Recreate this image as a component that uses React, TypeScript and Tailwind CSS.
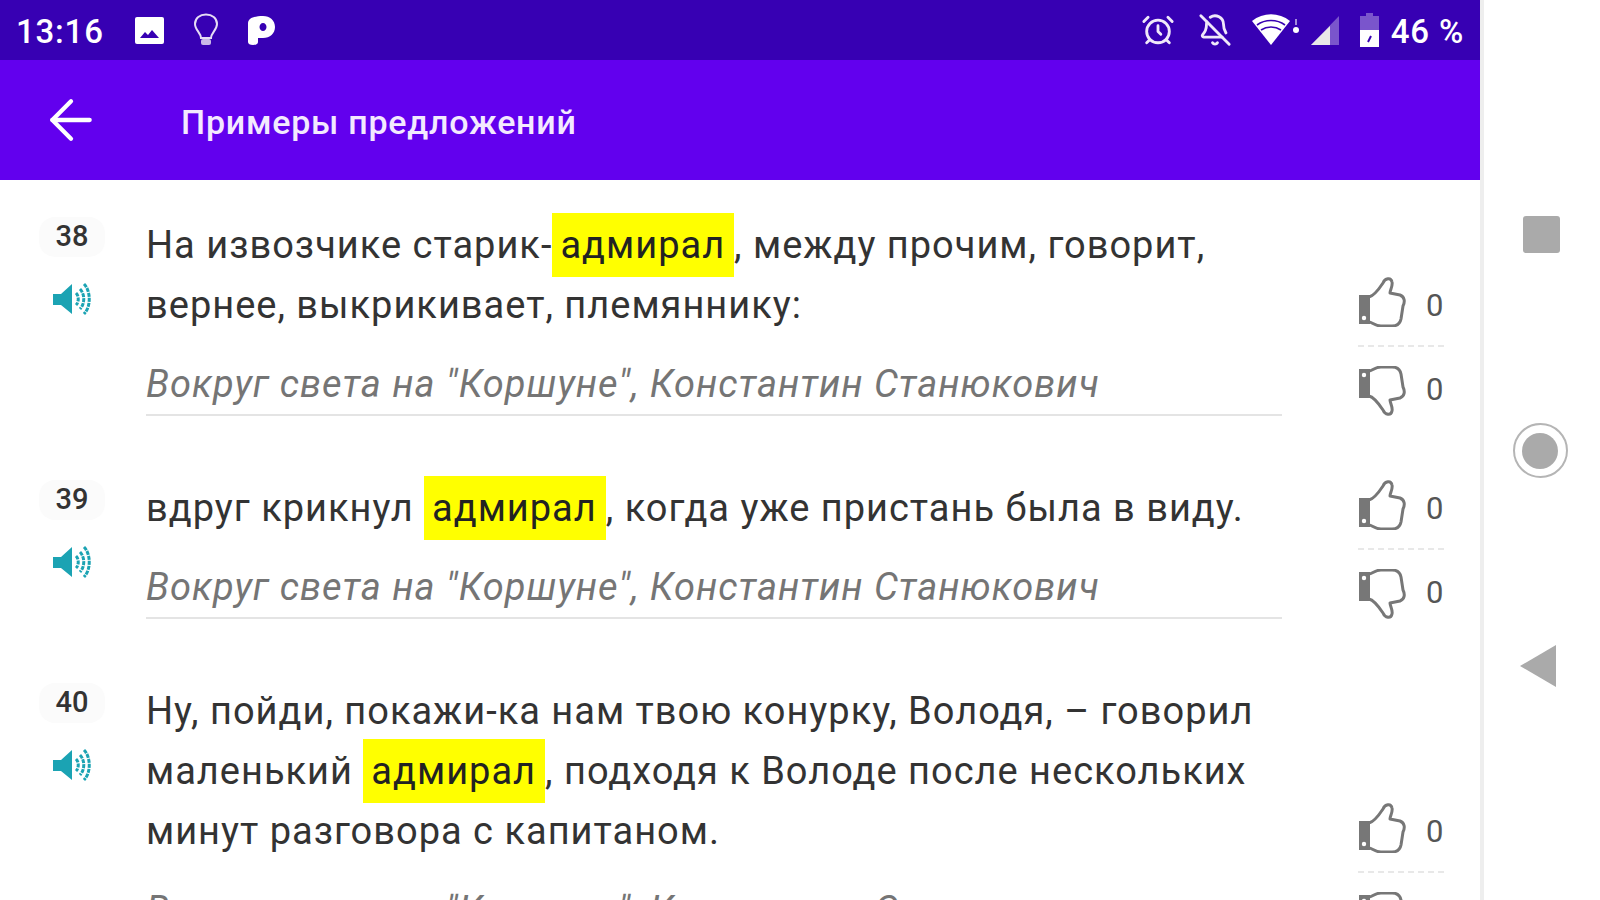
import { AlarmClock, ArrowLeft, BellOff } from "lucide-react";

interface Sentence {
  id: number;
  parts: (string | { hl: string })[];
}

const SOURCE = 'Вокруг света на "Коршуне", Константин Станюкович';

const SENTENCES: Sentence[] = [
  {
    id: 38,
    parts: ["На извозчике старик-", { hl: "адмирал" }, ", между прочим, говорит, вернее, выкрикивает, племяннику:"],
  },
  {
    id: 39,
    parts: ["вдруг крикнул ", { hl: "адмирал" }, ", когда уже пристань была в виду."],
  },
  {
    id: 40,
    parts: [
      "Ну, пойди, покажи-ка нам твою конурку, Володя, – говорил маленький ",
      { hl: "адмирал" },
      ", подходя к Володе после нескольких минут разговора с капитаном.",
    ],
  },
];

function Thumb({ down }: { down?: boolean }) {
  return (
    <svg width="48" height="50" viewBox="0 0 48 50" fill="none" className={down ? "-scale-y-100" : ""}>
      <rect x="1" y="18" width="11" height="29" fill="#777777" />
      <circle cx="6" cy="41" r="2.2" fill="#ffffff" />
      <path
        d="M11 20C16 19 21 12 25 6C27 1 33 0 34 5C35 9 32 13 32 16L42 18C47 20 47 25 45 29L43 42C42 47 38 49 34 49L23 49C17 49 14 45 11 45"
        stroke="#777777"
        strokeWidth="3"
        strokeLinejoin="round"
      />
    </svg>
  );
}

function Speaker() {
  return (
    <svg width="39" height="34" viewBox="0 0 39 34" fill="none">
      <path d="M0 12H8L19 2V32L8 23H0Z" fill="#1ba3b3" />
      <path d="M23 11C26 14 26 20 23 23" stroke="#1ba3b3" strokeWidth="3" strokeDasharray="4 1" />
      <path d="M27 7C32 12 32 22 27 27" stroke="#1ba3b3" strokeWidth="3" strokeDasharray="4 1" />
      <path d="M31 2C38 9 38 25 31 32" stroke="#1ba3b3" strokeWidth="3" strokeDasharray="4 1" />
    </svg>
  );
}

function StatusBar() {
  return (
    <div className="h-[60px] shrink-0 bg-[#3700b3] flex items-center text-white font-medium text-[33px] tracking-[0.8px]">
      <span className="ml-[16px] w-[88px] pt-[4px]">13:16</span>
      <svg width="29" height="27" viewBox="0 0 29 27" className="ml-[31px]">
        <rect width="29" height="27" rx="2" fill="#ffffff" />
        <path d="M5 21L10 15L13 18L17 13L24 21Z" fill="#3700b3" />
      </svg>
      <svg width="26" height="34" viewBox="0 0 26 34" fill="none" className="ml-[29px]">
        <path
          d="M8 25C8 20 2 17 2 11C2 5 7 1.5 13 1.5C19 1.5 24 5 24 11C24 17 18 20 18 25Z"
          stroke="#e6dcf5"
          strokeWidth="2"
        />
        <rect x="8" y="26" width="10" height="6" rx="2" fill="#c9b8e8" />
      </svg>
      <svg width="27" height="29" viewBox="0 0 27 29" className="ml-[29px]">
        <path
          fillRule="evenodd"
          d="M2 3C5 1 9 0 15 0C22 0 27 4.500 27 11C27 17.500 22 22 15 22H10V26C10 28 8 29 5 29C2 29 0 28 0 26V7C0 5 1 4 2 3ZM15 7C13 7 11.500 8.800 11.500 11C11.500 13.200 13 15 15 15C17 15 18.500 13.200 18.500 11C18.500 8.800 17 7 15 7Z"
          fill="#ffffff"
        />
      </svg>
      <div className="ml-auto flex items-center">
        <AlarmClock size={34} strokeWidth={2} className="text-[#f0e8fa]" />
        <BellOff size={34} strokeWidth={2} className="ml-[23px] text-[#f0e8fa]" />
        <svg width="48" height="32" viewBox="0 0 48 32" className="ml-[20px]">
          <path d="M0 7C11 -2 27 -2 38 7L19 31Z" fill="#ffffff" />
          <path d="M5 11C13 5 25 5 33 11M9 16C15 12 23 12 29 16" stroke="#3700b3" strokeWidth="1.6" fill="none" />
          <circle cx="44" cy="16" r="3" fill="#ffffff" />
          <rect x="43" y="5" width="2" height="6" fill="#a58bdc" />
        </svg>
        <svg width="28" height="29" viewBox="0 0 28 29" className="ml-[11px]">
          <path d="M0 29L28 0V29Z" fill="#7a55cc" />
          <path d="M0 29L19 10V29Z" fill="#e8e8e8" />
        </svg>
        <svg width="19" height="34" viewBox="0 0 19 34" className="ml-[21px]">
          <path d="M6 0H13V3H19V34H0V3H6Z" fill="#7a55cc" />
          <path d="M0 17H19V34H0Z" fill="#ffffff" />
          <path d="M8 29L11 23" stroke="#3700b3" strokeWidth="2" />
        </svg>
        <span className="ml-[12px] mr-[16px] pt-[4px]">46 %</span>
      </div>
    </div>
  );
}

function Row({ sentence }: { sentence: Sentence }) {
  return (
    <div className="flex">
      <div className="w-[146px] shrink-0 flex flex-col items-center pr-[2px]">
        <div className="mt-[2px] w-[66px] h-[40px] rounded-[16px] bg-[#fbfbfb] flex items-center justify-center text-[29px] font-medium text-[#333333]">
          {sentence.id}
        </div>
        <div className="mt-[25px]">
          <Speaker />
        </div>
      </div>
      <div className="w-[1136px] shrink-0">
        <p className="text-[38px] leading-[60px] tracking-[1px] text-[#333333]">
          {sentence.parts.map((part, i) =>
            typeof part === "string" ? (
              <span key={i}>{part}</span>
            ) : (
              <span key={i} className="bg-[#ffff00] pl-[8px] pr-[9px] py-[10px] text-[#222222]">
                {part.hl}
              </span>
            )
          )}
        </p>
        <div className="mt-[19px] border-b-2 border-[#e4e4e4] text-[38px] leading-[60px] tracking-[1px] italic text-[#757575]">
          {SOURCE}
        </div>
      </div>
      <div className="ml-[76px] w-[86px] self-end flex flex-col">
        <div className="flex items-center pb-[18px] border-b-2 border-dashed border-[#e8e8e8]">
          <Thumb />
          <span className="ml-[20px] mt-[6px] text-[31px] leading-none text-[#555555]">0</span>
        </div>
        <div className="flex items-center pt-[19px]">
          <Thumb down />
          <span className="ml-[20px] -mt-[3px] text-[31px] leading-none text-[#555555]">0</span>
        </div>
      </div>
    </div>
  );
}

export default function App() {
  return (
    <div className="w-[1600px] h-[900px] overflow-hidden flex bg-white font-['Roboto',sans-serif]">
      <div className="w-[1480px] shrink-0 flex flex-col">
        <StatusBar />
        <div className="h-[120px] shrink-0 bg-[#6200ee] flex items-center text-white">
          <ArrowLeft size={64} strokeWidth={1.6} className="ml-[39px]" />
          <h1 className="ml-[78px] pt-[4px] text-[34px] font-medium tracking-[0.75px] text-[#f3e9ff]">
            Примеры предложений
          </h1>
        </div>
        <div className="pt-[35px] flex flex-col gap-[62px]">
          {SENTENCES.map((s) => (
            <Row key={s.id} sentence={s} />
          ))}
        </div>
      </div>
      <div className="flex-1 border-l-4 border-[#eeeeee] flex flex-col items-center pt-[216px] pr-[2px]">
        <div className="w-[37px] h-[37px] rounded-[3px] bg-[#aaaaaa]" />
        <div className="mt-[170px] -ml-[2px] w-[55px] h-[55px] rounded-full border-2 border-[#b5b5b5] flex items-center justify-center">
          <div className="w-[36px] h-[36px] rounded-full bg-[#aaaaaa]" />
        </div>
        <svg width="36" height="42" viewBox="0 0 36 42" className="mt-[167px] mr-[6px]">
          <path d="M36 0V42L0 21Z" fill="#aaaaaa" />
        </svg>
      </div>
    </div>
  );
}
